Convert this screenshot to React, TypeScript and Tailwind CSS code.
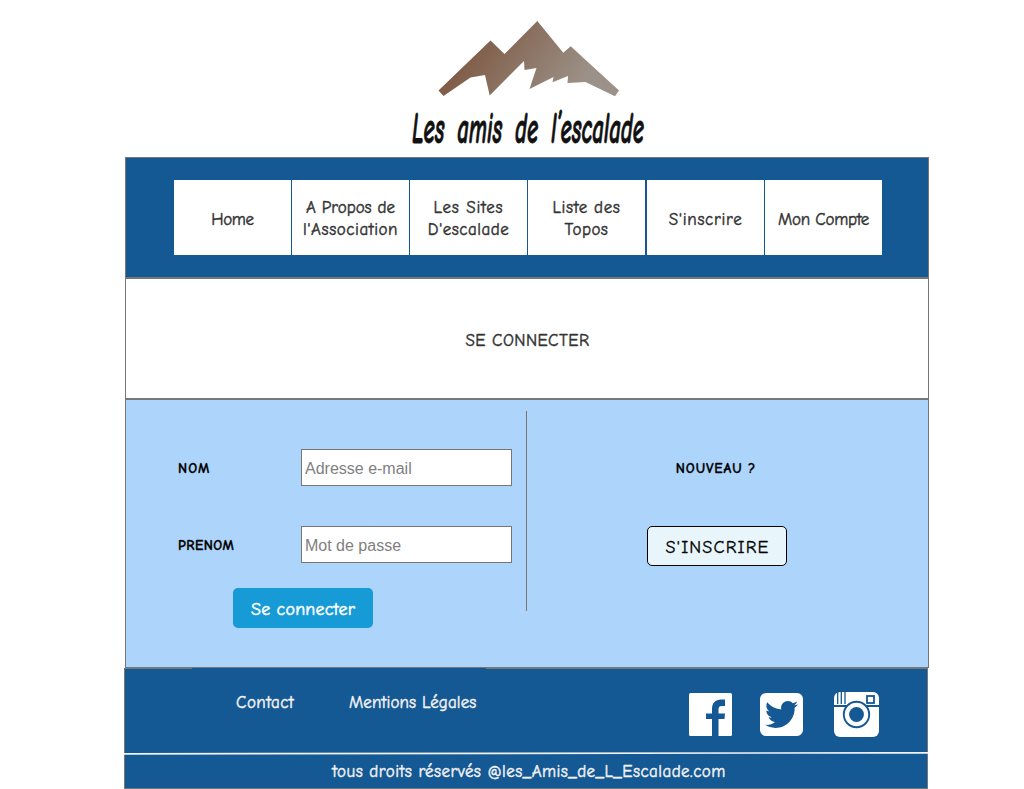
import { FaTwitter } from "react-icons/fa";

const navItems = [
  { gap: "mr-px", pad: "pt-[4px]", lines: [{ text: "Home", track: "tracking-[-0.4px]" }] },
  {
    gap: "mr-px",
    pad: "pt-[3px]",
    lines: [
      { text: "A Propos de", track: "tracking-[0.02px]" },
      { text: "l'Association", track: "tracking-[0.55px]" },
    ],
  },
  {
    gap: "mr-px",
    pad: "pt-[3px]",
    lines: [
      { text: "Les Sites", track: "tracking-[0.8px]" },
      { text: "D'escalade", track: "tracking-[0.5px]" },
    ],
  },
  {
    gap: "mr-[2px]",
    pad: "pt-[3px]",
    lines: [
      { text: "Liste des", track: "tracking-[0.6px]" },
      { text: "Topos", track: "tracking-[0.5px]" },
    ],
  },
  { gap: "mr-px", pad: "pt-[4px]", lines: [{ text: "S'inscrire", track: "tracking-[0.7px]" }] },
  { gap: "", pad: "pt-[4px]", lines: [{ text: "Mon Compte", track: "tracking-[-0.25px]" }] },
];

function Logo() {
  return (
    <svg className="ml-[400px] block h-[157px] w-[260px] overflow-visible" viewBox="400 0 260 157">
      <defs>
        <linearGradient id="rock" gradientUnits="userSpaceOnUse" x1="475" y1="45" x2="575" y2="115">
          <stop offset="0" stopColor="#805d48" />
          <stop offset="0.9" stopColor="#9c9188" />
        </linearGradient>
      </defs>
      <path
        fill="url(#rock)"
        d="M438.5 90.5 L490.5 40.5 L504.5 54 L537.3 21 L563.3 52.7 L570.7 46.3 L619 90.5 L615 96.3 L585.5 82 L567.5 83 L568 76 L552.5 82.3 L553.5 77 L529.5 89 L536.5 68 L524.5 70 L524 61 L489.7 95.5 L485 75 L470.5 77.5 L443.5 96 Z"
      />
      <text
        x="412"
        y="142.5"
        fontSize="44"
        wordSpacing="9"
        textLength="232"
        lengthAdjust="spacingAndGlyphs"
        fill="#111"
        stroke="#111"
        strokeWidth="0.8"
        className="font-['Comic_Sans_MS','Comic_Neue',sans-serif] font-bold italic"
      >
        Les amis de l’escalade
      </text>
    </svg>
  );
}

function Facebook() {
  return (
    <svg className="mt-px h-[43px] w-[43px]" viewBox="0 0 43 43">
      <rect width="43" height="43" rx="1.5" fill="#fff" />
      <path fill="#145894" d="M23 43V26h-6v-5.500h6V16C23 10 26.500 6.500 32 6.500h4V13h-3c-2.500 0-3.500 1-3.500 3.500v4H36l-.5 5.500h-6v17z" />
    </svg>
  );
}

function Instagram() {
  return (
    <svg className="h-[45px] w-[45px]" viewBox="0 0 45 45">
      <rect width="45" height="45" rx="6" fill="#fff" />
      <g fill="none" stroke="#145894">
        <path strokeWidth="1.300" d="M3.700 0v12M7.300 0v12M11 0v12" />
        <path strokeWidth="1.800" d="M0 14h45" />
        <rect x="33" y="4" width="7" height="7" strokeWidth="1.800" />
        <circle cx="22.500" cy="22.500" r="12.700" fill="#fff" strokeWidth="1.900" />
      </g>
      <circle cx="22.500" cy="22.500" r="7.400" fill="#145894" />
    </svg>
  );
}

const labelClass = "w-[123px] pt-[2px] text-[14px] font-bold text-black [-webkit-text-stroke:0.3px]";
const inputClass =
  "h-[37px] w-[211px] border border-[#767676] bg-white px-[3px] pt-[2px] font-['Liberation_Sans',sans-serif] text-[16px] placeholder:text-[#808080]";

export default function App() {
  return (
    <div className="h-[789px] w-[1024px] overflow-hidden bg-white font-['Comic_Sans_MS','Comic_Neue','Noto_Sans',sans-serif] text-[#333]">
      <Logo />
      <div className="ml-[125px] w-[804px]">
        <header className="h-[121px] border border-[#777] bg-[#145894] pt-[22px] pl-[48px]">
          <nav className="flex h-[75px]">
            {navItems.map((item) => (
              <a
                key={item.lines[0].text}
                className={`flex w-[117px] flex-col items-center justify-center bg-white text-[17px] leading-[22px] whitespace-nowrap [-webkit-text-stroke:0.45px] ${item.gap} ${item.pad}`}
              >
                {item.lines.map((line) => (
                  <span key={line.text} className={line.track}>
                    {line.text}
                  </span>
                ))}
              </a>
            ))}
          </nav>
        </header>
        <section className="flex h-[121px] items-center justify-center border border-[#777] pt-[5px]">
          <h1 className="pl-px text-[17px] tracking-[0.45px] [-webkit-text-stroke:0.45px]">SE CONNECTER</h1>
        </section>
        <main className="flex h-[269px] border border-[#777] bg-[#add4fb] pt-[11px]">
          <form className="h-[200px] w-[401px] border-r border-[#777] pt-[38px] pl-[52px]">
            <div className="flex h-[37px] items-center">
              <label className={`${labelClass} tracking-[1.2px]`}>NOM</label>
              <input placeholder="Adresse e-mail" className={inputClass} />
            </div>
            <div className="mt-[40px] flex h-[37px] items-center">
              <label className={`${labelClass} tracking-[0.5px]`}>PRENOM</label>
              <input placeholder="Mot de passe" className={inputClass} />
            </div>
            <button
              type="button"
              className="mt-[25px] ml-[55px] h-[40px] w-[140px] rounded-[5px] bg-[#169bd7] pt-[3px] text-[18px] tracking-[0.2px] text-white [-webkit-text-stroke:0.5px]"
            >
              Se connecter
            </button>
          </form>
          <div className="flex w-[380px] flex-col items-center pt-[47px]">
            <h2 className="-ml-[2px] h-[22px] text-[14px] leading-[22px] font-bold tracking-[0.9px] text-black [-webkit-text-stroke:0.3px]">NOUVEAU ?</h2>
            <button
              type="button"
              className="mt-[46px] h-[40px] w-[140px] rounded-[5px] border border-black bg-[#e8f5fa] pt-[2px] pl-[7px] pr-[6px] text-[18px] tracking-[1.15px] text-black [-webkit-text-stroke:0.3px]"
            >
              S'INSCRIRE
            </button>
          </div>
        </main>
      </div>
      <footer className="relative ml-[124px] h-[121px] w-[804px] border border-[#777] bg-[#145894] text-[#f2f2f2] [-webkit-text-stroke:0.45px]">
        <div className="absolute top-[-1px] left-[67px] h-px w-[294px] bg-[#145894]" />
        <div className="flex h-[83px] pt-[23px]">
          <div className="flex w-[564px] pl-[111px] text-[17px] leading-[22px]">
            <a className="w-[113px] tracking-[0.45px]">Contact</a>
            <a className="tracking-[0.1px]">Mentions Légales</a>
          </div>
          <div className="flex items-start">
            <Facebook />
            <span className="mt-px ml-[28px] flex h-[43px] w-[43px] items-center justify-center rounded-[6px] bg-white">
              <FaTwitter className="h-[33px] w-[33px] text-[#145894]" />
            </span>
            <span className="ml-[31px]">
              <Instagram />
            </span>
          </div>
        </div>
        <svg className="-ml-px block h-[3px] w-[804px]" viewBox="0 0 804 3">
          <path d="M0 1.800L804 .8" stroke="#f2f2f2" strokeWidth="1.700" />
        </svg>
        <p className="pt-[6px] pl-[6px] text-center text-[17px] leading-[22px] tracking-[0.45px]">
          tous droits réservés @les_Amis_de_L_Escalade.com
        </p>
      </footer>
    </div>
  );
}
